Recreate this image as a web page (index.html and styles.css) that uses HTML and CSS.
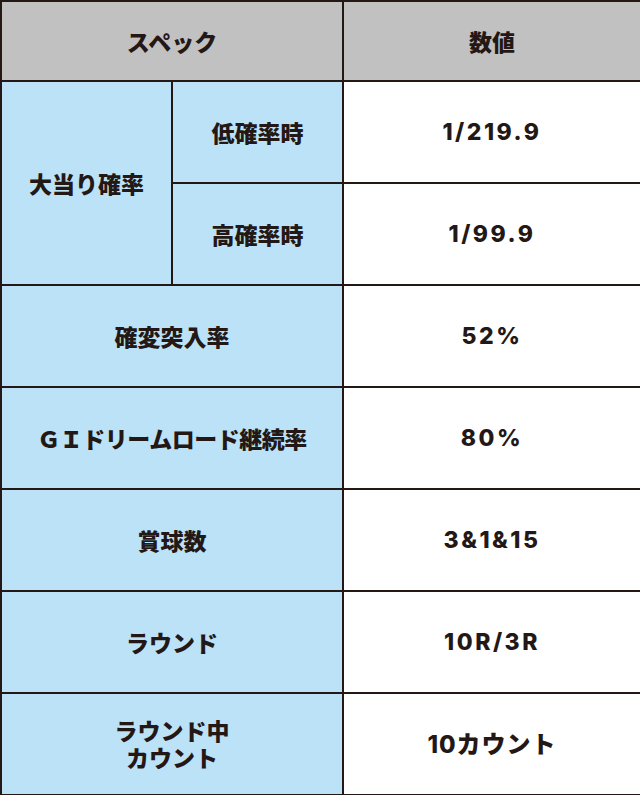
FILE: index.html
```html
<!DOCTYPE html>
<html lang="ja">
<head>
<meta charset="utf-8">
<link rel="stylesheet" href="styles.css">
</head>
<body>
<table class="spec">
  <colgroup>
    <col class="c1"><col class="c2"><col class="c3">
  </colgroup>
  <tr class="head">
    <th colspan="2">スペック</th>
    <th>数値</th>
  </tr>
  <tr class="row">
    <td class="lab" rowspan="2">大当り確率</td>
    <td class="lab">低確率時</td>
    <td class="val num">1/219.9</td>
  </tr>
  <tr class="row">
    <td class="lab">高確率時</td>
    <td class="val num">1/99.9</td>
  </tr>
  <tr class="row">
    <td class="lab" colspan="2">確変突入率</td>
    <td class="val num">52%</td>
  </tr>
  <tr class="row">
    <td class="lab tight" colspan="2">ＧＩドリームロード継続率</td>
    <td class="val num">80%</td>
  </tr>
  <tr class="row">
    <td class="lab" colspan="2">賞球数</td>
    <td class="val num">3&amp;1&amp;15</td>
  </tr>
  <tr class="row">
    <td class="lab" colspan="2">ラウンド</td>
    <td class="val num">10R/3R</td>
  </tr>
  <tr class="row">
    <td class="lab two" colspan="2">ラウンド中<br>カウント</td>
    <td class="val num mixed">10カウント</td>
  </tr>
</table>
</body>
</html>
```
FILE: styles.css
```css
html, body {
  margin: 0;
  padding: 0;
  background: #ffffff;
}
.spec {
  width: 640px;
  border-collapse: collapse;
  table-layout: fixed;
  font-family: "Noto Sans CJK JP", sans-serif;
  font-weight: 900;
  color: #231815;
}
.c1 { width: 171px; }
.c2 { width: 171px; }
.c3 { width: 298px; }
.spec th, .spec td {
  border: 2px solid #231815;
  text-align: center;
  vertical-align: middle;
  padding: 0;
  font-size: 23px;
  line-height: 27px;
}
.head { height: 80px; }
.head th {
  background: #c1c1c1;
  font-weight: 900;
}
.row { height: 102px; }
.lab {
  background: #bce2f8;
}
.tight { letter-spacing: -0.5px; }
.val { background: #ffffff; }
.num {
  font-family: Inter, "Noto Sans CJK JP", sans-serif;
  font-weight: 800;
  font-size: 25px;
  letter-spacing: 2.5px;
}
.spec td.mixed {
  font-size: 24px;
  letter-spacing: 1px;
}
```
